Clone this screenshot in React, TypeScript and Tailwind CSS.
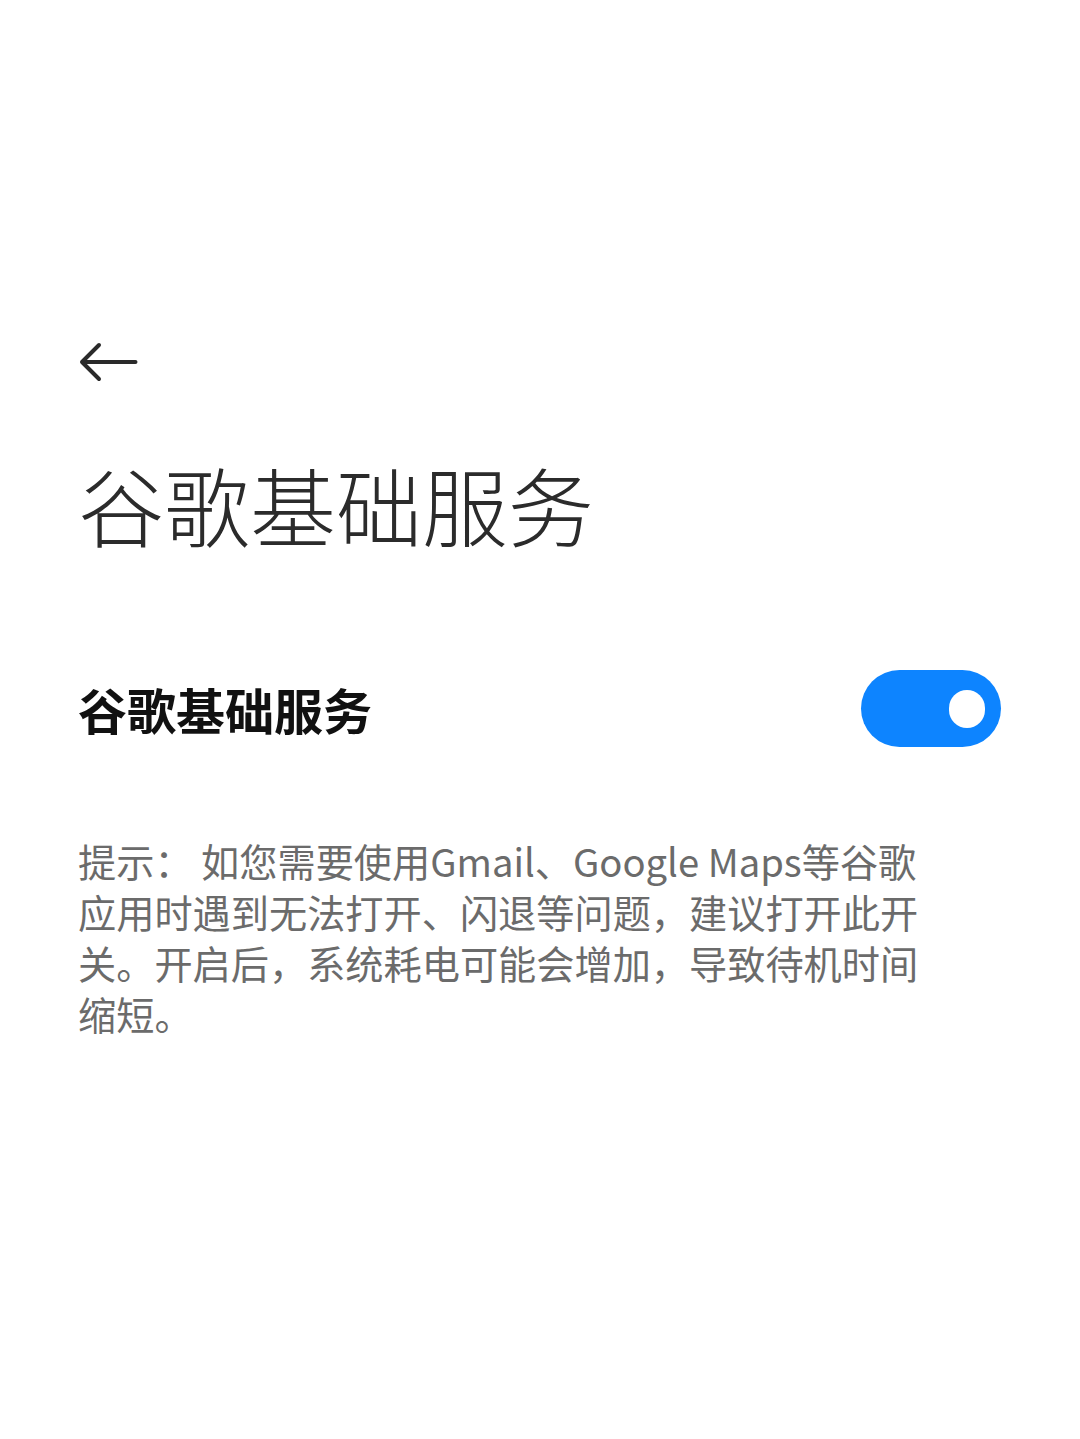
import React from "react";

const cjk = { fontFamily: '"Noto Sans CJK SC", "Noto Sans", sans-serif' };

function BackArrow() {
  return (
    <svg width="60" height="40" viewBox="0 0 60 40" fill="none" className="block">
      <path
        d="M57.5 20 H4 M21 3 L4 20 L21 37"
        stroke="#2a2a2a"
        strokeWidth="4"
        strokeLinecap="round"
        strokeLinejoin="round"
      />
    </svg>
  );
}

function Toggle() {
  return (
    <div className="flex h-[77px] w-[140px] items-center justify-end rounded-full bg-[#0d84ff] pr-[16px]">
      <div className="h-[38px] w-[36px] rounded-full bg-white" />
    </div>
  );
}

export default function App() {
  return (
    <div className="min-h-screen bg-white pl-[78px] pr-[79px]" style={cjk}>
      <div className="pt-[342px]">
        <BackArrow />
      </div>
      <h1 className="mt-[79px] text-[86px] font-light leading-none text-[#2b2b2b]">
        谷歌基础服务
      </h1>
      <div className="mt-[123px] flex items-center justify-between">
        <span className="text-[49px] font-bold leading-none text-[#111111]">谷歌基础服务</span>
        <Toggle />
      </div>
      <p className="mt-[88px] text-[38.2px] leading-[51px] text-[#6b6b6b]">
        <span className="block">提示：&nbsp;如您需要使用Gmail、Google Maps等谷歌</span>
        <span className="block">应用时遇到无法打开、闪退等问题，建议打开此开</span>
        <span className="block">关。开启后，系统耗电可能会增加，导致待机时间</span>
        <span className="block">缩短。</span>
      </p>
    </div>
  );
}
